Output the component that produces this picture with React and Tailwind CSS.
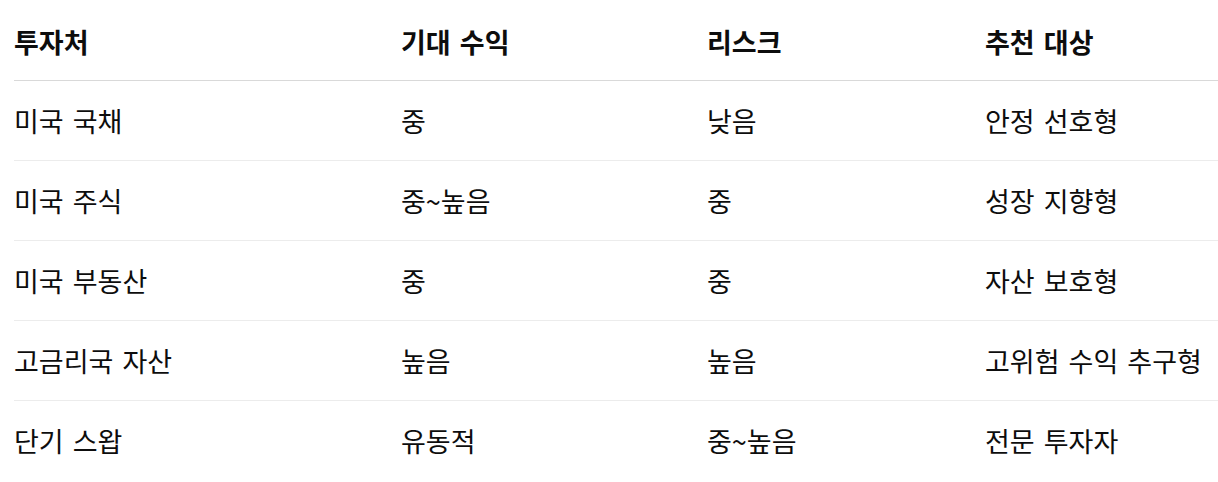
import React from "react";

const rows = [
  ["미국 국채", "중", "낮음", "안정 선호형"],
  ["미국 주식", "중~높음", "중", "성장 지향형"],
  ["미국 부동산", "중", "중", "자산 보호형"],
  ["고금리국 자산", "높음", "높음", "고위험 수익 추구형"],
  ["단기 스왑", "유동적", "중~높음", "전문 투자자"],
];

const headers = ["투자처", "기대 수익", "리스크", "추천 대상"];

const App = () => {
  return (
    <div
      className="bg-white w-[1218px] h-[482px] overflow-hidden pl-[14px] text-[#0d0d0d]"
      style={{ fontFamily: '"Noto Sans CJK KR", "Noto Sans", sans-serif' }}
    >
      <table className="w-[1204px] border-collapse text-[27px] leading-none [word-spacing:3px] table-fixed">
        <colgroup>
          <col className="w-[387px]" />
          <col className="w-[306px]" />
          <col className="w-[278px]" />
          <col />
        </colgroup>
        <thead>
          <tr className="border-b border-[#d9d9d9]">
            {headers.map((h) => (
              <th key={h} className="h-[80px] text-left font-bold align-middle p-0 pt-[3px]">
                {h}
              </th>
            ))}
          </tr>
        </thead>
        <tbody>
          {rows.map((row, i) => (
            <tr
              key={i}
              className={i < rows.length - 1 ? "border-b border-[#ececec]" : ""}
            >
              {row.map((cell, j) => (
                <td key={j} className="h-[80px] p-0 pt-[1px] align-middle whitespace-nowrap">
                  {cell}
                </td>
              ))}
            </tr>
          ))}
        </tbody>
      </table>
    </div>
  );
};

export default App;
